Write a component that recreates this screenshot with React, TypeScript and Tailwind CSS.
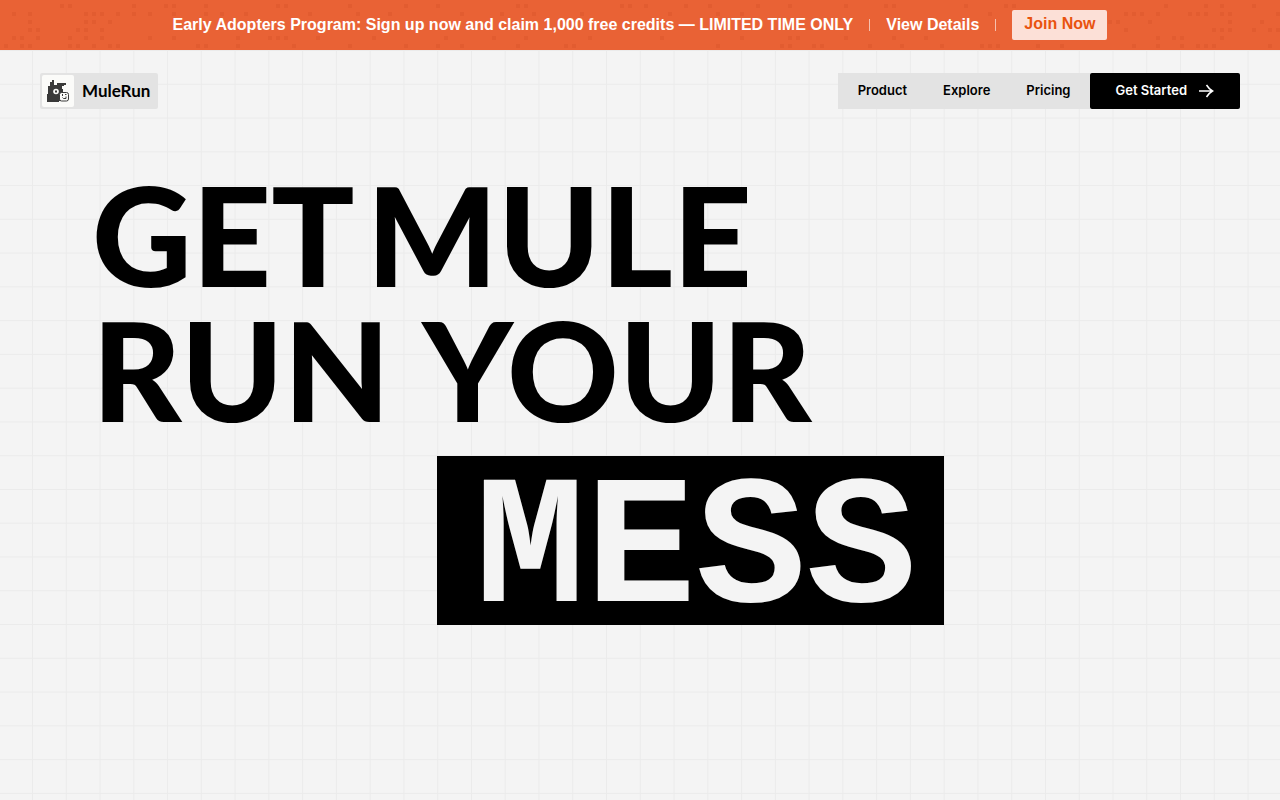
const navLinks = [
  { label: 'Product', href: '#product' },
  { label: 'Explore', href: '#explore' },
  { label: 'Pricing', href: '#pricing' },
];

// Dot columns of the banner, one list per row (8px pitch)
const bannerDots = [
  [7, 8, 16, 20, 21, 25, 34, 35, 43, 50, 54, 64, 65, 77, 78, 80, 85, 88, 94, 98, 105, 110, 111, 120, 125, 126, 145, 150, 152, 156],
  [1, 3, 10, 11, 12, 14, 16, 18, 21, 25, 27, 30, 38, 44, 48, 57, 62, 66, 72, 83, 89, 92, 123, 140, 141, 142, 144, 148, 149, 150, 152, 153, 159],
  [3, 10, 11, 13, 138, 139, 143, 153, 157],
  [3, 4, 9, 10, 12, 140, 151, 152, 153, 156, 158, 159],
  [1, 2, 4, 8, 10, 12, 18, 21, 29, 33, 34, 35, 39, 46, 55, 61, 65, 73, 82, 92, 98, 99, 105, 111, 115, 144, 146, 147, 152],
  [0, 2, 3, 8, 9, 11, 13, 14, 24, 25, 29, 36, 43, 50, 54, 57, 64, 70, 71, 89, 97, 98, 101, 102, 108, 112, 117, 122, 123, 124, 129, 132, 141, 144, 147, 149, 150, 151, 158],
];

function BannerDots() {
  return (
    <svg className="absolute inset-0 h-full w-full" fill="#e25c30" aria-hidden="true">
      {bannerDots.map((cols, row) =>
        cols.map((col) => (
          <rect key={`${row}-${col}`} x={col * 8 + 4} y={row * 8 + 4} width="4" height="4" />
        ))
      )}
    </svg>
  );
}

function MuleLogo() {
  return (
    <svg width="22" height="22" viewBox="0 0 22 22" aria-hidden="true">
      <path
        fill="#3a3a3a"
        d="M5 0h2v5h3V3h9v2h-2v1h-2v3h1v3h2v7h-3v2h-3v1H0v-8h1V6h2V2h2z"
      />
      <circle cx="9" cy="11.5" r="2.8" fill="#fbfbf9" />
      <rect x="8" y="10.5" width="2" height="2" fill="#3a3a3a" />
      <rect x="12.500" y="12.500" width="9" height="8.500" rx="2" fill="#fbfbf9" stroke="#3a3a3a" />
      <path fill="none" stroke="#3a3a3a" d="M15.500 14v2M18 14.500h1.500M15.500 17.500l1 1H19v-2" />
    </svg>
  );
}

export default function App() {
  return (
    <div className="flex min-h-screen flex-col bg-[#f4f4f4] font-['Inter',sans-serif] text-black">
      <aside className="relative flex h-[50px] items-center justify-center overflow-hidden bg-[#e96235] font-['Liberation_Sans',sans-serif] text-base font-bold text-white">
        <BannerDots />
        <div className="relative flex items-center gap-4">
          <span>Early Adopters Program: Sign up now and claim 1,000 free credits — LIMITED TIME ONLY</span>
          <span className="h-3 w-px bg-white/60" />
          <a href="#details">View Details</a>
          <span className="h-3 w-px bg-white/60" />
          <button type="button" className="h-[30px] rounded-xs bg-[#fce0d7] px-3 pb-0.5 text-[#e9530f]">
            Join Now
          </button>
        </div>
      </aside>

      <div className="relative flex-1 overflow-hidden">
        {/* Background grid: 36 square cells between the two 32px margins */}
        <div className="absolute inset-0 bg-[linear-gradient(to_bottom,#ebebeb_1px,transparent_1px)] bg-size-[100%_calc((100vw-64px)/36)]" />
        <div className="absolute inset-y-0 right-[31px] left-8 bg-[linear-gradient(to_right,#ebebeb_1px,transparent_1px)] bg-size-[calc((100vw-64px)/36)_100%]" />

        <header className="relative flex items-center justify-between px-10 pt-[23px]">
          <a
            href="#home"
            className="flex h-9 items-center gap-2 rounded-xs bg-[#e3e3e3] pr-2 pl-0.5 font-['Lato',sans-serif] text-[17px] font-bold"
          >
            <span className="flex size-8 items-center justify-center rounded-xs bg-[#fbfbf9]">
              <MuleLogo />
            </span>
            MuleRun
          </a>
          <div className="flex h-9">
            <nav className="flex items-center gap-9 bg-[#e3e3e3] px-5 text-[13px] font-semibold">
              {navLinks.map((link) => (
                <a key={link.label} href={link.href}>
                  {link.label}
                </a>
              ))}
            </nav>
            <button
              type="button"
              className="flex items-center gap-3 rounded-xs bg-black px-[25px] text-[13px] font-semibold text-white"
            >
              Get Started
              <svg width="16" height="14" viewBox="0 0 16 14" fill="none" stroke="currentColor" strokeWidth="1.5" aria-hidden="true">
                <path d="M0 7h13.500M7.500 1q2.500 4 6 6q-3.500 2-6 6" />
              </svg>
            </button>
          </div>
        </header>

        <h1 className="relative flex flex-col items-start pl-[92px] pt-[57px] font-['Lato',sans-serif] text-[138px] leading-[135px] font-black">
          <span className="flex gap-3">
            <span>GET</span> <span>MULE</span>
          </span>
          <span className="flex gap-8">
            <span>RUN</span> <span>YOUR</span>
          </span>
          <span className="mt-5 ml-[345px] bg-black pt-[29px] pr-[27px] pb-[5px] pl-[38px] font-['Liberation_Mono',monospace] text-[184px] font-bold text-[#f4f4f4]">
            MESS
          </span>
        </h1>
      </div>
    </div>
  );
}
